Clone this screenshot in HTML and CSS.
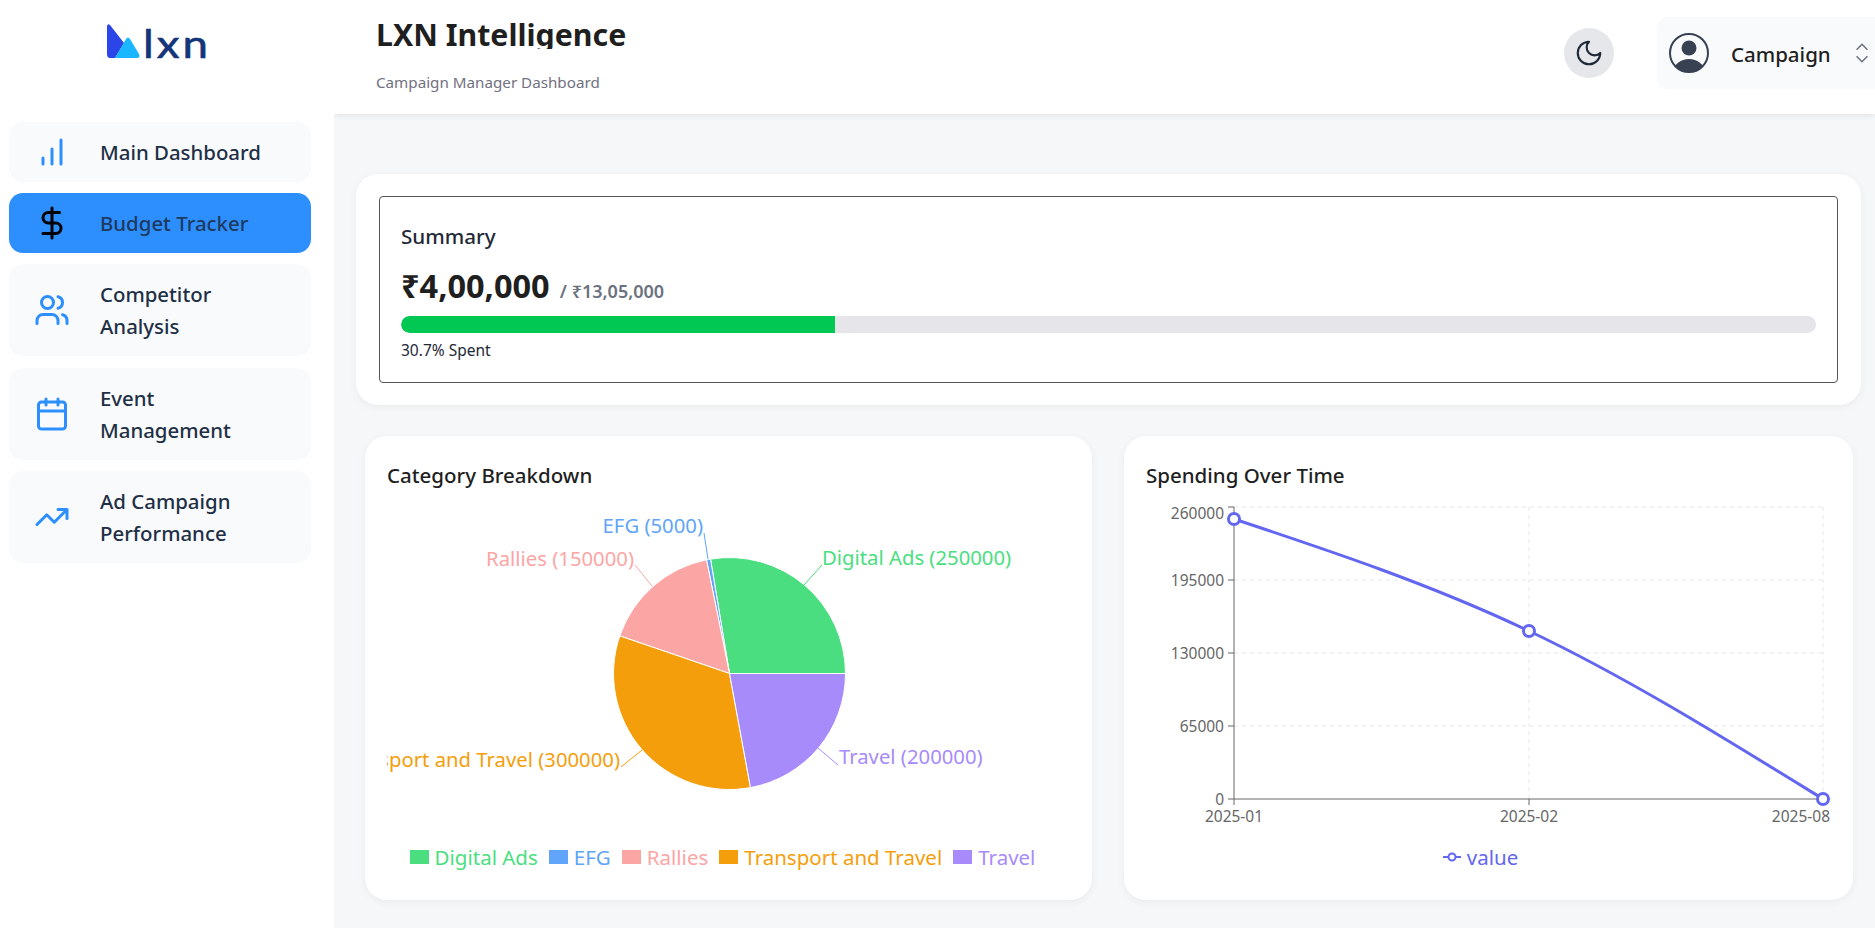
FILE: index.html
```html
<!DOCTYPE html>
<html lang="en">
<head>
    <meta charset="UTF-8">
    <meta name="viewport" content="width=device-width, initial-scale=1.0">
    <title>LXN Intelligence | Budget Tracker</title>
    <link rel="stylesheet" href="styles.css">
</head>
<body>
<div class="app">
    <aside class="sidebar">
        <div class="logo">
            <svg class="logo-mark" width="34" height="36" viewBox="0 0 34 36">
                <path d="M0 4 Q0 0 3 2 L17 20 L8 35 H3 Q0 35 0 31 Z" fill="#2b45e8"/>
                <path d="M8 35 L19 16 Q21 13 23 16 L32 31 Q33.5 35 30 35 Z" fill="#1ab6ff"/>
            </svg>
            <span class="logo-text">lxn</span>
        </div>
        <nav class="nav">
            <a class="nav-item">
                <svg class="nav-icon" viewBox="0 0 24 24"><path d="M12 20V10M18 20V4M6 20v-4"/></svg>
                <span>Main Dashboard</span>
            </a>
            <a class="nav-item active">
                <svg class="nav-icon" viewBox="0 0 24 24"><path d="M12 2v20M17 5H9.5a3.5 3.5 0 0 0 0 7h5a3.5 3.5 0 0 1 0 7H6"/></svg>
                <span>Budget Tracker</span>
            </a>
            <a class="nav-item">
                <svg class="nav-icon" viewBox="0 0 24 24"><path d="M16 21v-2a4 4 0 0 0-4-4H6a4 4 0 0 0-4 4v2"/><circle cx="9" cy="7" r="4"/><path d="M22 21v-2a4 4 0 0 0-3-3.87M16 3.13a4 4 0 0 1 0 7.75"/></svg>
                <span>Competitor Analysis</span>
            </a>
            <a class="nav-item">
                <svg class="nav-icon" viewBox="0 0 24 24"><path d="M8 2v4M16 2v4M3 10h18"/><rect x="3" y="4" width="18" height="18" rx="2"/></svg>
                <span>Event Management</span>
            </a>
            <a class="nav-item">
                <svg class="nav-icon" viewBox="0 0 24 24"><path d="M22 7l-8.5 8.5-5-5L2 17M16 7h6v6"/></svg>
                <span>Ad Campaign Performance</span>
            </a>
        </nav>
    </aside>

    <div class="main">
        <header class="topbar">
            <div class="brand">
                <h1>LXN Intelligence</h1>
                <p>Campaign Manager Dashboard</p>
            </div>
            <div class="topbar-right">
                <button class="theme-btn">
                    <svg viewBox="0 0 24 24" width="30" height="30"><path d="M12 3a6 6 0 0 0 9 9 9 9 0 1 1-9-9Z"/></svg>
                </button>
                <div class="account">
                    <svg class="avatar" viewBox="0 0 40 40" width="40" height="40">
                        <defs><clipPath id="avatarClip"><circle cx="20" cy="20" r="19"/></clipPath></defs>
                        <circle cx="20" cy="15" r="7.5" fill="#374151"/>
                        <ellipse cx="20" cy="38" rx="15" ry="12" fill="#374151" clip-path="url(#avatarClip)"/>
                        <circle cx="20" cy="20" r="19" fill="none" stroke="#374151" stroke-width="2"/>
                    </svg>
                    <span class="account-name">Campaign</span>
                    <svg class="chevrons" viewBox="0 0 24 24" width="26" height="26"><path d="M7 15l5 5 5-5M7 9l5-5 5 5"/></svg>
                </div>
            </div>
        </header>

        <main class="content">
            <section class="summary-card">
                <div class="summary-box">
                    <h2>Summary</h2>
                    <div class="amount"><strong>₹4,00,000</strong> <span>/ ₹13,05,000</span></div>
                    <div class="progress"><div class="progress-fill" style="width: 30.7%"></div></div>
                    <div class="progress-label">30.7% Spent</div>
                </div>
            </section>

            <div class="charts">
                <section class="chart-card">
                    <h3>Category Breakdown</h3>
                    <svg class="chart" width="683" height="350" viewBox="387 493 683 350">
                        <g stroke="#fff" stroke-width="1">
                            <path d="M729.5 673.5 L845.5 673.5 A116 116 0 0 0 710.5 559.1 Z" fill="#4ade80"/>
                            <path d="M729.5 673.5 L710.5 559.1 A116 116 0 0 0 706.5 559.8 Z" fill="#60a5fa"/>
                            <path d="M729.5 673.5 L706.5 559.8 A116 116 0 0 0 619.8 635.9 Z" fill="#fca5a5"/>
                            <path d="M729.5 673.5 L619.8 635.9 A116 116 0 0 0 750.5 787.6 Z" fill="#f59e0b"/>
                            <path d="M729.5 673.5 L750.5 787.6 A116 116 0 0 0 845.5 673.5 Z" fill="#a78bfa"/>
                        </g>
                        <g fill="none" stroke-width="1">
                            <path d="M804 585 L822 565" stroke="#4ade80"/>
                            <path d="M708 559 L704 533" stroke="#60a5fa"/>
                            <path d="M652 586 L635 565" stroke="#fca5a5"/>
                            <path d="M642 750 L621 767" stroke="#f59e0b"/>
                            <path d="M818 748 L838 765" stroke="#a78bfa"/>
                        </g>
                        <g class="pie-label">
                            <text x="822" y="565" fill="#4ade80">Digital Ads (250000)</text>
                            <text x="703" y="533" fill="#60a5fa" text-anchor="end">EFG (5000)</text>
                            <text x="634" y="566" fill="#fca5a5" text-anchor="end">Rallies (150000)</text>
                            <text x="620" y="767" fill="#f59e0b" text-anchor="end">Transport and Travel (300000)</text>
                            <text x="839" y="764" fill="#a78bfa">Travel (200000)</text>
                        </g>
                    </svg>
                    <ul class="legend pie-legend">
                        <li class="legend-green"><i></i>Digital Ads</li>
                        <li class="legend-blue"><i></i>EFG</li>
                        <li class="legend-pink"><i></i>Rallies</li>
                        <li class="legend-orange"><i></i>Transport and Travel</li>
                        <li class="legend-purple"><i></i>Travel</li>
                    </ul>
                </section>

                <section class="chart-card">
                    <h3>Spending Over Time</h3>
                    <svg class="chart" width="685" height="350" viewBox="1146 493 685 350">
                        <g class="grid">
                            <path d="M1234 507H1823M1234 580H1823M1234 653H1823M1234 726H1823"/>
                            <path d="M1529 507V799M1823 507V799"/>
                        </g>
                        <g class="axis">
                            <path d="M1234 507V799H1823"/>
                            <path d="M1228 507H1234M1228 580H1234M1228 653H1234M1228 726H1234M1228 799H1234M1234 799V805M1529 799V805M1823 799V805"/>
                        </g>
                        <g class="tick">
                            <text x="1224" y="519" text-anchor="end">260000</text>
                            <text x="1224" y="586" text-anchor="end">195000</text>
                            <text x="1224" y="659" text-anchor="end">130000</text>
                            <text x="1224" y="732" text-anchor="end">65000</text>
                            <text x="1224" y="805" text-anchor="end">0</text>
                            <text x="1234" y="822" text-anchor="middle">2025-01</text>
                            <text x="1529" y="822" text-anchor="middle">2025-02</text>
                            <text x="1830" y="822" text-anchor="end">2025-08</text>
                        </g>
                        <path class="line" d="M1234 519C1332.2 551.6 1430.8 584.4 1529 631C1627.2 677.6 1724.8 738.4 1823 799"/>
                        <g class="dots">
                            <circle cx="1234" cy="519" r="5.5"/>
                            <circle cx="1529" cy="631" r="5.5"/>
                            <circle cx="1823" cy="799" r="5.5"/>
                        </g>
                    </svg>
                    <ul class="legend line-legend">
                        <li>
                            <svg width="18" height="14" viewBox="0 0 18 14"><path d="M0 7H18" stroke="#6366f1" stroke-width="2"/><circle cx="9" cy="7" r="3.5" fill="#fff" stroke="#6366f1" stroke-width="2"/></svg>
                            value
                        </li>
                    </ul>
                </section>
            </div>
        </main>
    </div>
</div>
</body>
</html>
```

FILE: styles.css
```css
* {
    box-sizing: border-box;
}
body {
    margin: 0;
    font-family: "Noto Sans", "Open Sans", Arial, sans-serif;
    background-color: #f6f7f9;
    color: #1f2937;
}
.app {
    display: flex;
    height: 928px;
    overflow: hidden;
}

/* sidebar */
.sidebar {
    width: 334px;
    flex-shrink: 0;
    background: #fff;
    padding: 0 23px 0 9px;
}
.logo {
    height: 122px;
    display: flex;
    padding: 23px 0 0 98px;
}
.logo-mark {
    flex-shrink: 0;
}
.logo-text {
    height: 40px;
    font-family: "Lato", sans-serif;
    font-size: 38px;
    line-height: 40px;
    letter-spacing: 2.5px;
    color: #14357a;
    -webkit-text-stroke: 0.6px #14357a;
    margin-left: 2px;
    transform: scaleX(1.2);
    transform-origin: left;
}
.nav {
    display: flex;
    flex-direction: column;
    gap: 11.2px;
}
.nav-item {
    display: flex;
    align-items: center;
    gap: 30px;
    padding: 14px 25px;
    background: #f9fafb;
    border-radius: 14px;
    font-size: 20.4px;
    font-weight: 500;
    line-height: 32px;
    color: #1e2f46;
}
.nav-item.active {
    background: #2d8ffe;
    color: #1e3a5f;
}
.nav-icon {
    width: 36px;
    height: 36px;
    margin: -2px 0;
    flex-shrink: 0;
    fill: none;
    stroke: #2d8ffe;
    stroke-width: 2;
    stroke-linecap: round;
    stroke-linejoin: round;
}
.active .nav-icon {
    stroke: #000;
}

/* top bar */
.main {
    flex: 1;
    min-width: 0;
    overflow: hidden;
}
.topbar {
    height: 114px;
    background: #fff;
    box-shadow: 0 2px 6px rgba(0,0,0,0.08);
    display: flex;
    justify-content: space-between;
    padding: 0 0 0 42px;
}
.brand h1 {
    margin: 17px 0 0;
    height: 32px;
    overflow: hidden;
    font-size: 30.3px;
    font-weight: 700;
    line-height: 36px;
    color: #1f1f1f;
}
.brand p {
    margin: 23px 0 0;
    font-size: 15.2px;
    line-height: 20px;
    color: #71717f;
}
.topbar-right {
    display: flex;
    align-items: flex-start;
    gap: 43px;
    margin-right: -20px;
}
.theme-btn {
    width: 50px;
    height: 50px;
    margin-top: 28px;
    border: 0;
    border-radius: 50%;
    background: #e5e7eb;
    display: flex;
    align-items: center;
    justify-content: center;
    padding: 0;
}
.theme-btn svg {
    fill: none;
    stroke: #1f2937;
    stroke-width: 1.7;
    stroke-linecap: round;
    stroke-linejoin: round;
}
.account {
    width: 238px;
    height: 72px;
    margin-top: 17px;
    padding-left: 12px;
    background: #f9fafb;
    border-radius: 10px;
    display: flex;
    align-items: center;
}
.account-name {
    margin: 2px 0 0 22px;
    font-size: 20.5px;
    font-weight: 500;
    color: #1f1f1f;
}
.chevrons {
    margin-left: 18px;
    fill: none;
    stroke: #6b7280;
    stroke-width: 1.4;
}

/* content */
.content {
    padding: 60px 14px 0 22px;
}
.summary-card {
    background: #fff;
    border-radius: 22px;
    padding: 22px 23px;
    height: 231px;
    box-shadow: 0 2px 8px rgba(0,0,0,0.05);
}
.summary-box {
    height: 187px;
    border: 1px solid #555;
    border-radius: 4px;
    padding: 25px 21px 0;
}
.summary-box h2 {
    margin: 0;
    font-size: 20.6px;
    font-weight: 500;
    line-height: 28px;
}
.amount {
    margin-top: 14px;
    line-height: 44px;
    height: 48px;
    color: #1f1f1f;
}
.amount strong {
    font-size: 32.5px;
    font-weight: 700;
}
.amount span {
    margin-left: 6px;
    font-size: 18px;
    font-weight: 600;
    color: #6b7280;
}
.progress {
    height: 17px;
    margin-top: 4px;
    border-radius: 9px;
    background: #e5e5ea;
    overflow: hidden;
}
.progress-fill {
    height: 100%;
    background: #00c853;
    border-radius: 9px 0 0 9px;
}
.progress-label {
    margin-top: 7px;
    font-size: 15.5px;
    line-height: 20px;
}
.charts {
    display: flex;
    gap: 32px;
    margin: 31px 8px 0 9px;
}
.chart-card {
    flex: 1;
    height: 464px;
    background: #fff;
    border-radius: 22px;
    padding: 23px 22px 0;
    box-shadow: 0 2px 8px rgba(0,0,0,0.05);
}
.chart-card h3 {
    margin: 0 0 1px;
    font-size: 20.5px;
    font-weight: 500;
    line-height: 33px;
    color: #1f1f1f;
}
.chart {
    display: block;
}
.pie-label text {
    font-size: 20.3px;
}
.grid path {
    fill: none;
    stroke: #e5e7eb;
    stroke-dasharray: 4 4;
}
.axis path {
    fill: none;
    stroke: #666;
}
.tick text {
    font-size: 15.5px;
    fill: #666;
}
.line {
    fill: none;
    stroke: #6366f1;
    stroke-width: 3;
}
.dots circle {
    fill: #fff;
    stroke: #6366f1;
    stroke-width: 3;
}
.legend {
    list-style: none;
    margin: 0;
    padding: 0;
    display: flex;
    justify-content: center;
    gap: 11px;
    font-size: 20.5px;
    line-height: 26px;
}
.legend li {
    display: flex;
    align-items: center;
}
.legend i {
    width: 19px;
    height: 14px;
    margin-right: 6px;
    background: currentColor;
}
.pie-legend {
    margin-top: 1px;
    padding-right: 12px;
}
.line-legend {
    color: #6366f1;
    margin-top: 1px;
    gap: 6px;
    padding-right: 16px;
}
.line-legend svg {
    margin-right: 6px;
}
.legend-green { color: #4ade80; }
.legend-blue { color: #60a5fa; }
.legend-pink { color: #fca5a5; }
.legend-orange { color: #f59e0b; }
.legend-purple { color: #a78bfa; }
```
